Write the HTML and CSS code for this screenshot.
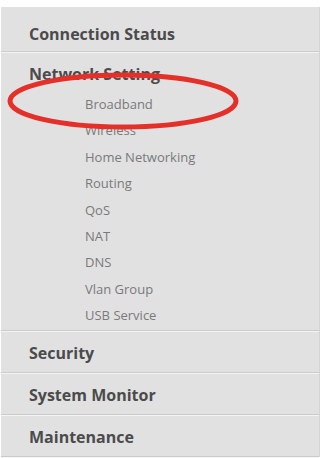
FILE: index.html
```html
<!DOCTYPE html>
<html lang="en">
<head>
    <meta charset="UTF-8">
    <meta name="viewport" content="width=device-width, initial-scale=1.0">
    <title>Menu</title>
    <link rel="stylesheet" href="styles.css">
</head>
<body>

<nav class="menu">
    <div class="menu-head first">Connection Status</div>
    <div class="menu-group">
        <div class="menu-head open">Network Setting</div>
        <ul class="submenu">
            <li>Broadband</li>
            <li>Wireless</li>
            <li>Home Networking</li>
            <li>Routing</li>
            <li>QoS</li>
            <li>NAT</li>
            <li>DNS</li>
            <li>Vlan Group</li>
            <li>USB Service</li>
        </ul>
    </div>
    <div class="menu-head">Security</div>
    <div class="menu-head">System Monitor</div>
    <div class="menu-head">Maintenance</div>

    <!-- red marker drawn over the menu -->
    <svg class="marker" width="320" height="140" viewBox="0 0 320 140">
        <ellipse cx="123" cy="70" rx="113" ry="26" fill="none" stroke="#e5302a" stroke-width="5"/>
    </svg>
</nav>

</body>
</html>
```

FILE: styles.css
```css
body {
    margin: 0;
    background: #fff;
    font-family: "Open Sans", "Liberation Sans", sans-serif;
}
.menu {
    position: relative;
    margin: 7px 0 0 1px;
    background: #e1e1e1;
    border-right: 1px solid #d4d4d4;
}
.menu-head {
    padding: 11px 0 9px 28px;
    line-height: 20px;
    font-size: 16px;
    font-weight: bold;
    color: #4b4b4b;
    border-bottom: 1px solid #cbcbcb;
    box-shadow: 0 1px 0 #f4f4f4;
    margin-bottom: 1px;
}
.menu-head.first {
    padding: 17px 0 7px 28px;
}
.menu-head.open {
    padding: 11px 0 7px 28px;
    border-bottom: none;
    box-shadow: none;
    margin-bottom: 0;
}
.menu-group {
    border-bottom: 1px solid #cbcbcb;
    box-shadow: 0 1px 0 #f4f4f4;
    margin-bottom: 1px;
}
.submenu {
    list-style: none;
    margin: 0;
    padding: 0 0 1px 84px;
}
.submenu li {
    line-height: 26.4px;
    font-size: 13px;
    color: #7a7a7a;
}
.marker {
    position: absolute;
    left: -1px;
    top: 24px;
}
```
